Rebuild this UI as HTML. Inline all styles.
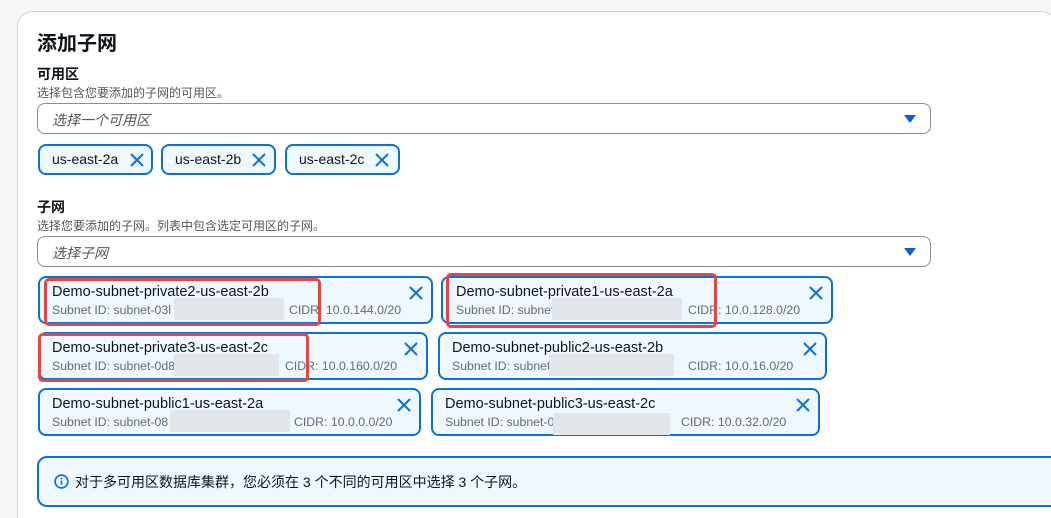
<!DOCTYPE html>
<html style="width:1051px;height:518px;overflow:hidden"><head><meta charset="utf-8"><style>
*{margin:0;padding:0;box-sizing:border-box}
body{width:1051px;height:518px;background:#f6f6f6;position:relative;overflow:hidden;font-family:"Liberation Sans","Noto Sans CJK SC",sans-serif;color:#0f141a}
.card{position:absolute;left:17px;top:11px;width:1040px;height:520px;background:#fff;border:1px solid #d1d5db;border-radius:16px}
.a{position:absolute;white-space:nowrap}
.h1{font-size:20px;font-weight:bold;left:37px;top:27px}
.lab{font-size:14px;font-weight:bold}
.desc{font-size:12px;color:#555}
.sel{position:absolute;left:37px;width:894px;height:31px;border:1px solid #8c8c94;border-radius:8px;font-style:italic;color:#555;font-size:14px;padding:6px 0 0 14px}
.tri{position:absolute;right:14px;top:11px;width:0;height:0;border-left:6px solid transparent;border-right:6px solid transparent;border-top:8px solid #0f5fd1}
.tok{position:absolute;height:31px;top:144px;border:2px solid #0972d3;border-radius:8px;background:#f0f8ff;font-size:14px;padding:5px 0 0 12px}
.x{position:absolute;width:14px;height:14px}
.sub{position:absolute;height:48px;border:2px solid #0972d3;border-radius:8px;background:#f0f8ff}
.sub .n{position:absolute;left:12px;top:6px;font-size:14.5px;white-space:nowrap}
.sub .i{position:absolute;left:12px;top:25px;font-size:12.3px;color:#5f6b7a;white-space:nowrap}
.blur{position:absolute;height:22px;background:#e3e7ec}
.red{position:absolute;border:3px solid #e84444;border-radius:5px}
</style></head><body>
<div class="card"></div>
<div class="a h1">添加子网</div>
<div class="a lab" style="left:37px;top:64px">可用区</div>
<div class="a desc" style="left:37px;top:84px">选择包含您要添加的子网的可用区。</div>
<div class="sel" style="top:103px">选择一个可用区<div class="tri"></div></div>
<div class="tok" style="left:38px;width:115px">us-east-2a<svg class="x" style="left:90px;top:7px" viewBox="0 0 14 14"><path d="M1 1L13 13M13 1L1 13" stroke="#0972d3" stroke-width="2"/></svg></div>
<div class="tok" style="left:161px;width:115px">us-east-2b<svg class="x" style="left:89px;top:7px" viewBox="0 0 14 14"><path d="M1 1L13 13M13 1L1 13" stroke="#0972d3" stroke-width="2"/></svg></div>
<div class="tok" style="left:285px;width:115px">us-east-2c<svg class="x" style="left:88px;top:7px" viewBox="0 0 14 14"><path d="M1 1L13 13M13 1L1 13" stroke="#0972d3" stroke-width="2"/></svg></div>
<div class="a lab" style="left:37px;top:197px">子网</div>
<div class="a desc" style="left:37px;top:217px">选择您要添加的子网。列表中包含选定可用区的子网。</div>
<div class="sel" style="top:236px">选择子网<div class="tri"></div></div>

<div class="sub" style="left:38px;top:276px;width:395px"><div class="n">Demo-subnet-private2-us-east-2b</div><div class="i">Subnet ID: subnet-03l<span style="position:absolute;left:237px">CIDR: 10.0.144.0/20</span></div><svg class="x" style="left:369px;top:8px" viewBox="0 0 14 14"><path d="M1 1L13 13M13 1L1 13" stroke="#0972d3" stroke-width="2"/></svg></div>
<div class="sub" style="left:441px;top:276px;width:392px"><div class="n" style="left:13px">Demo-subnet-private1-us-east-2a</div><div class="i" style="left:13px">Subnet ID: subnet<span style="position:absolute;left:232px">CIDR: 10.0.128.0/20</span></div><svg class="x" style="left:366px;top:8px" viewBox="0 0 14 14"><path d="M1 1L13 13M13 1L1 13" stroke="#0972d3" stroke-width="2"/></svg></div>
<div class="sub" style="left:38px;top:332px;width:390px"><div class="n">Demo-subnet-private3-us-east-2c</div><div class="i">Subnet ID: subnet-0d8<span style="position:absolute;left:233px">CIDR: 10.0.160.0/20</span></div><svg class="x" style="left:364px;top:8px" viewBox="0 0 14 14"><path d="M1 1L13 13M13 1L1 13" stroke="#0972d3" stroke-width="2"/></svg></div>
<div class="sub" style="left:438px;top:332px;width:389px"><div class="n">Demo-subnet-public2-us-east-2b</div><div class="i">Subnet ID: subnet<span style="position:absolute;left:236px">CIDR: 10.0.16.0/20</span></div><svg class="x" style="left:363px;top:8px" viewBox="0 0 14 14"><path d="M1 1L13 13M13 1L1 13" stroke="#0972d3" stroke-width="2"/></svg></div>
<div class="sub" style="left:38px;top:388px;width:383px"><div class="n">Demo-subnet-public1-us-east-2a</div><div class="i">Subnet ID: subnet-08<span style="position:absolute;left:242px">CIDR: 10.0.0.0/20</span></div><svg class="x" style="left:357px;top:8px" viewBox="0 0 14 14"><path d="M1 1L13 13M13 1L1 13" stroke="#0972d3" stroke-width="2"/></svg></div>
<div class="sub" style="left:431px;top:388px;width:389px"><div class="n">Demo-subnet-public3-us-east-2c</div><div class="i">Subnet ID: subnet-0<span style="position:absolute;left:236px">CIDR: 10.0.32.0/20</span></div><svg class="x" style="left:363px;top:8px" viewBox="0 0 14 14"><path d="M1 1L13 13M13 1L1 13" stroke="#0972d3" stroke-width="2"/></svg></div>

<div class="blur" style="left:174px;top:298px;width:110px"></div>
<div class="blur" style="left:552px;top:298px;width:130px"></div>
<div class="blur" style="left:174px;top:354px;width:105px"></div>
<div class="blur" style="left:549px;top:354px;width:125px"></div>
<div class="blur" style="left:170px;top:410px;width:120px"></div>
<div class="blur" style="left:553px;top:413px;width:117px"></div>

<div class="red" style="left:44px;top:278px;width:277px;height:48px"></div>
<div class="red" style="left:446px;top:273px;width:271px;height:55px"></div>
<div class="red" style="left:38px;top:333px;width:271px;height:49px"></div>

<div style="position:absolute;left:37px;top:456px;width:1030px;height:51px;border:2px solid #0972d3;border-radius:10px;background:#f0f8ff"></div>
<svg class="a" style="left:54px;top:474px" width="15" height="15" viewBox="0 0 16 16"><circle cx="8" cy="8" r="6.8" fill="none" stroke="#0972d3" stroke-width="1.8"/><path d="M8 7v4.5" stroke="#0972d3" stroke-width="1.8"/><circle cx="8" cy="4.8" r="1" fill="#0972d3"/></svg>
<div class="a" style="left:75px;top:472px;font-size:14px">对于多可用区数据库集群，您必须在 3 个不同的可用区中选择 3 个子网。</div>
</body></html>
